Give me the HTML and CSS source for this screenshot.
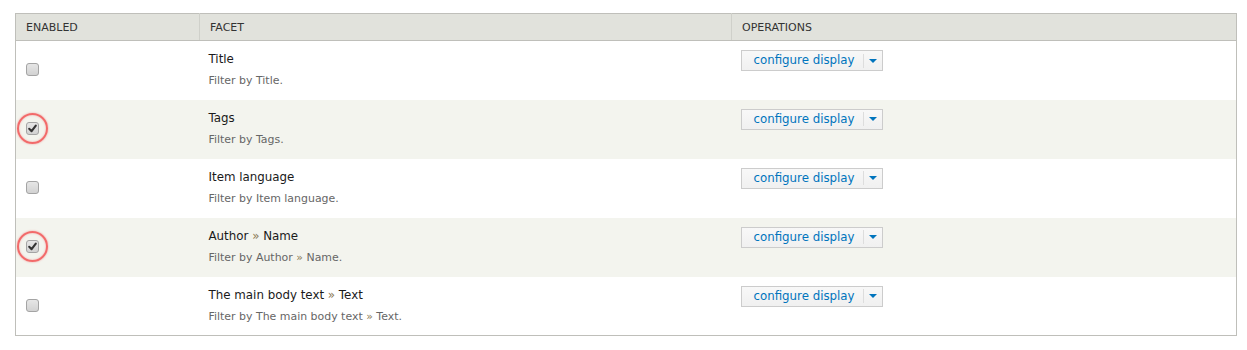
FILE: index.html
```html
<!DOCTYPE html>
<html lang="en">
<head>
  <meta charset="UTF-8" />
  <title>Facets</title>
  <link rel="stylesheet" href="styles.css">
</head>
<body>

<table class="facets">
  <thead>
    <tr>
      <th class="col-enabled">Enabled</th>
      <th class="col-facet">Facet</th>
      <th class="col-ops">Operations</th>
    </tr>
  </thead>
  <tbody>
    <tr>
      <td class="cell-check"><span class="check"></span></td>
      <td>
        <div class="facet-title">Title</div>
        <div class="facet-desc">Filter by Title.</div>
      </td>
      <td><div class="dropbutton"><a class="dropbutton-action" href="#">configure display</a><span class="dropbutton-toggle"><span class="arrow"></span></span></div></td>
    </tr>
    <tr class="even">
      <td class="cell-check"><span class="check is-on marked"><svg viewBox="0 0 13 13" width="13" height="13"><path d="M3.2 6.8 L5.6 9.2 L9.8 3.6" fill="none" stroke="#333" stroke-width="2.1" stroke-linecap="round" stroke-linejoin="round"/></svg></span></td>
      <td>
        <div class="facet-title">Tags</div>
        <div class="facet-desc">Filter by Tags.</div>
      </td>
      <td><div class="dropbutton"><a class="dropbutton-action" href="#">configure display</a><span class="dropbutton-toggle"><span class="arrow"></span></span></div></td>
    </tr>
    <tr>
      <td class="cell-check"><span class="check"></span></td>
      <td>
        <div class="facet-title">Item language</div>
        <div class="facet-desc">Filter by Item language.</div>
      </td>
      <td><div class="dropbutton"><a class="dropbutton-action" href="#">configure display</a><span class="dropbutton-toggle"><span class="arrow"></span></span></div></td>
    </tr>
    <tr class="even">
      <td class="cell-check"><span class="check is-on marked"><svg viewBox="0 0 13 13" width="13" height="13"><path d="M3.2 6.8 L5.6 9.2 L9.8 3.6" fill="none" stroke="#333" stroke-width="2.1" stroke-linecap="round" stroke-linejoin="round"/></svg></span></td>
      <td>
        <div class="facet-title">Author <span class="sep">»</span> Name</div>
        <div class="facet-desc">Filter by Author <span class="sep">»</span> Name.</div>
      </td>
      <td><div class="dropbutton"><a class="dropbutton-action" href="#">configure display</a><span class="dropbutton-toggle"><span class="arrow"></span></span></div></td>
    </tr>
    <tr>
      <td class="cell-check"><span class="check"></span></td>
      <td>
        <div class="facet-title">The main body text <span class="sep">»</span> Text</div>
        <div class="facet-desc">Filter by The main body text <span class="sep">»</span> Text.</div>
      </td>
      <td><div class="dropbutton"><a class="dropbutton-action" href="#">configure display</a><span class="dropbutton-toggle"><span class="arrow"></span></span></div></td>
    </tr>
  </tbody>
</table>

</body>
</html>
```

FILE: styles.css
```css
body { margin: 0; padding: 13px 10px 0 15px; font-family: "DejaVu Sans", "Lucida Grande", sans-serif; background: #fff; color: #222; }

.facets {
  width: 1222px;
  border-collapse: collapse;
  border: 1px solid #bfbfba;
  table-layout: fixed;
}
.facets th {
  background: #e1e2dc;
  border-bottom: 1px solid #bfbfba;
  border-left: 1px solid #cfd0ca;
  color: #333;
  font-size: 11px;
  font-weight: normal;
  text-transform: uppercase;
  text-align: left;
  height: 26px;
  padding: 0 10px;
}
.facets th:first-child { border-left: none; }
.col-enabled { width: 163px; }
.col-facet { width: 511px; }

.facets td {
  height: 59px;
  box-sizing: border-box;
  padding: 8px 9px;
  vertical-align: top;
}
.facets tr.even td { background: #f3f4ee; }
.facets td.cell-check { vertical-align: middle; padding: 0 10px; }

.check {
  position: relative;
  display: block;
  width: 11px;
  height: 11px;
  margin-top: -1px;
  border: 1px solid #a4a4a4;
  border-radius: 3px;
  background: linear-gradient(#e6e6e6, #d2d2d2);
}
.check svg { position: absolute; left: -1px; top: -1px; }
.check.marked::before {
  content: "";
  position: absolute;
  left: -10px;
  top: -10px;
  width: 27px;
  height: 27px;
  border: 2px solid #f26a6a;
  border-radius: 50%;
  box-shadow: 0 0 2px rgba(240, 90, 90, 0.6), inset 0 0 2px rgba(240, 90, 90, 0.5);
}

.facet-title { font-size: 11.85px; line-height: 18px; margin-top: 1px; color: #1a1a1a; }
.facet-desc { font-size: 10.95px; line-height: 18px; margin-top: 4px; color: #666; }
.sep { color: #8a7a55; }

.dropbutton {
  display: inline-flex;
  align-items: center;
  height: 19px;
  border: 1px solid #ccc;
  background: linear-gradient(#f8f8f8, #f0f0f0);
}
.dropbutton-action {
  font-size: 11.8px;
  color: #0074bd;
  text-decoration: none;
  padding: 0 8px 0 12px;
  line-height: 19px;
}
.dropbutton-toggle {
  display: flex;
  align-items: center;
  justify-content: center;
  width: 18px;
  height: 14px;
  border-left: 1px solid #ddd;
}
.arrow {
  width: 0;
  height: 0;
  border-left: 4.5px solid transparent;
  border-right: 4.5px solid transparent;
  border-top: 4px solid #0074bd;
  margin-left: 1px;
}
```
